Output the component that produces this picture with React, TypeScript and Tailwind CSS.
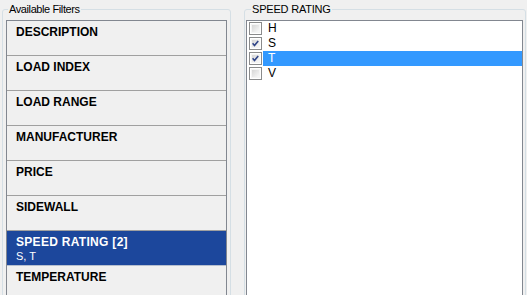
const filters = [
  { name: "DESCRIPTION" },
  { name: "LOAD INDEX" },
  { name: "LOAD RANGE" },
  { name: "MANUFACTURER" },
  { name: "PRICE" },
  { name: "SIDEWALL" },
  { name: "SPEED RATING [2]", sub: "S, T", selected: true },
  { name: "TEMPERATURE" },
];

const ratings = [
  { label: "H", checked: false },
  { label: "S", checked: true },
  { label: "T", checked: true, active: true },
  { label: "V", checked: false },
];

function CheckBox({ checked }: { checked: boolean }) {
  return (
    <div className="w-[13px] h-[13px] shrink-0 border border-[#8a8b8c] bg-white p-[1px]">
      <div className="w-full h-full bg-gradient-to-br from-[#d6d6d6] to-[#f8f8f8] border border-[#f4f4f4]">
        {checked && (
          <svg viewBox="0 0 9 9" className="w-full h-full overflow-visible">
            <path d="M0.8 4.2 L3.2 7 L8 1.2" fill="none" stroke="#2f4488" strokeWidth="2" />
          </svg>
        )}
      </div>
    </div>
  );
}

export default function App() {
  return (
    <div
      className="w-[527px] h-[295px] overflow-hidden bg-[#f0f0f0] flex text-black"
      style={{ fontFamily: '"Liberation Sans", Arial, sans-serif' }}
    >
      {/* Available Filters group */}
      <div className="relative ml-[2px] mt-[9px] w-[229px] h-[300px] shrink-0 border border-[#d5dfe5] rounded-[3px] pl-[3px] pr-[3px] pt-[10px]">
        <span className="absolute left-[5px] top-[-8px] px-[1px] bg-[#f0f0f0] text-[11px] leading-[14px] tracking-[-0.4px]">
          Available Filters
        </span>
        <div className="h-full border border-[#828790] bg-[#f0f0f0]">
          {filters.map((f) =>
            f.selected ? (
              <div key={f.name}>
                <div className="h-[34px] bg-[#1c479c] text-white pl-[9px] pt-[4px]">
                  <div className="text-[12px] leading-[14px] font-bold tracking-[0.3px]">{f.name}</div>
                  <div className="text-[11px] leading-[14px]">{f.sub}</div>
                </div>
                <div className="h-[1px] bg-[#b6bfcf]" />
              </div>
            ) : (
              <div
                key={f.name}
                className="h-[35px] border-b border-[#a0a0a0] pl-[9px] pt-[4px] text-[12px] leading-[14px] font-bold"
              >
                {f.name}
              </div>
            )
          )}
        </div>
      </div>

      {/* Speed Rating group */}
      <div className="relative ml-[13px] mt-[9px] w-[282px] h-[300px] shrink-0 border border-[#d5dfe5] rounded-[3px] pl-[1px] pr-[2px] pt-[10px]">
        <span className="absolute left-[6px] top-[-8px] px-[1px] bg-[#f0f0f0] text-[11px] leading-[14px] tracking-[-0.2px]">
          SPEED RATING
        </span>
        <div className="h-full border border-[#828790] bg-white">
          {ratings.map((r) => (
            <div key={r.label} className="h-[15px] flex items-center">
              <div className="ml-[2px]">
                <CheckBox checked={r.checked} />
              </div>
              <div
                className={`ml-[1px] flex-1 h-[15px] pl-[5px] text-[12px] leading-[15px] ${
                  r.active ? "bg-[#3399ff] text-white" : ""
                }`}
              >
                {r.label}
              </div>
            </div>
          ))}
        </div>
      </div>
    </div>
  );
}
